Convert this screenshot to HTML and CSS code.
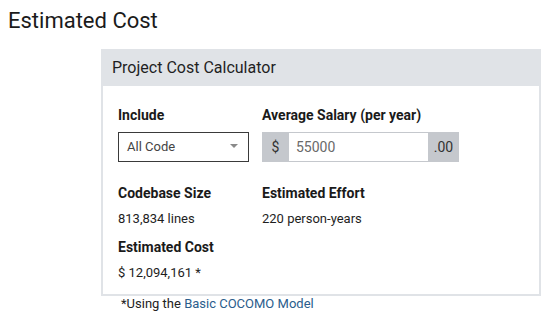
FILE: index.html
```html
<!DOCTYPE html>
<html>
<head>
<meta charset="utf-8">
<link rel="stylesheet" href="styles.css">
</head>
<body>
<h1 class="title">Estimated Cost</h1>
<div class="wrap">
  <div class="panel">
    <div class="panel-head">Project Cost Calculator</div>
    <div class="panel-body">
      <div class="row">
        <div class="col col-a">
          <div class="label">Include</div>
          <div class="select">
            <span>All Code</span>
            <span class="caret"></span>
          </div>
        </div>
        <div class="col">
          <div class="label">Average Salary (per year)</div>
          <div class="group">
            <span class="addon addon-l">$</span>
            <span class="input">55000</span>
            <span class="addon addon-r">.00</span>
          </div>
        </div>
      </div>
      <div class="row row-stats">
        <div class="col col-a">
          <div class="label">Codebase Size</div>
          <div class="value">813,834 lines</div>
        </div>
        <div class="col">
          <div class="label">Estimated Effort</div>
          <div class="value">220 person-years</div>
        </div>
      </div>
      <div class="row row-cost">
        <div class="col">
          <div class="label">Estimated Cost</div>
          <div class="value">$ 12,094,161 *</div>
        </div>
      </div>
    </div>
  </div>
  <div class="note">*Using the <a class="link" href="#">Basic COCOMO Model</a></div>
</div>
</body>
</html>
```

FILE: styles.css
```css
html, body {
  background: #ffffff;
}
body {
  margin: 8px;
  font-family: Roboto, "Liberation Sans", sans-serif;
  color: #1b1b1b;
}
.title {
  margin: 0;
  font-size: 22px;
  font-weight: 400;
  line-height: 25px;
}
.wrap {
  margin: 16px 0 0 93px;
  width: 440px;
}
.panel {
  border: 2px solid #e0e3e7;
  background: #ffffff;
}
.panel-head {
  background: #e0e3e7;
  height: 35px;
  line-height: 33px;
  padding-left: 9px;
  font-size: 16px;
  color: #1f1f1f;
}
.panel-body {
  padding: 20px 15px 12px 15px;
}
.row {
  display: flex;
}
.col-a {
  width: 144px;
}
.label {
  font-size: 14px;
  font-weight: 700;
  line-height: 18px;
  color: #1a1a1a;
}
.select {
  margin-top: 8px;
  height: 28px;
  border: 1px solid #3a3a3a;
  display: flex;
  align-items: center;
  justify-content: space-between;
  padding: 0 10px 0 8px;
  width: 111px;
  font-size: 13px;
  color: #444;
}
.select span:first-child {
  margin-top: -2px;
}
.caret {
  width: 0;
  height: 0;
  margin-top: -2px;
  border-left: 4px solid transparent;
  border-right: 4px solid transparent;
  border-top: 4px solid #8a8a8a;
}
.group {
  margin-top: 8px;
  display: flex;
  height: 30px;
  width: 197px;
}
.addon {
  background: #c5c8cd;
  display: flex;
  align-items: center;
  font-size: 14px;
  color: #333;
}
.addon-l {
  width: 27px;
  justify-content: center;
}
.addon-r {
  width: 31px;
  justify-content: center;
}
.input {
  flex: 1;
  border: 1px solid #c5c8cd;
  border-left: 0;
  border-right: 0;
  background: #fff;
  display: flex;
  align-items: center;
  padding-left: 7px;
  font-size: 14px;
  color: #6a6a6a;
}
.row-stats {
  margin-top: 22px;
}
.row-cost {
  margin-top: 10px;
}
.value {
  margin-top: 8px;
  font-size: 13px;
  line-height: 18px;
  color: #1e1e1e;
}
.note {
  margin-top: 0;
  padding-left: 20px;
  font-size: 13px;
  line-height: 16px;
  color: #222;
}
.link {
  color: #2b5d8c;
  text-decoration: none;
}
```
